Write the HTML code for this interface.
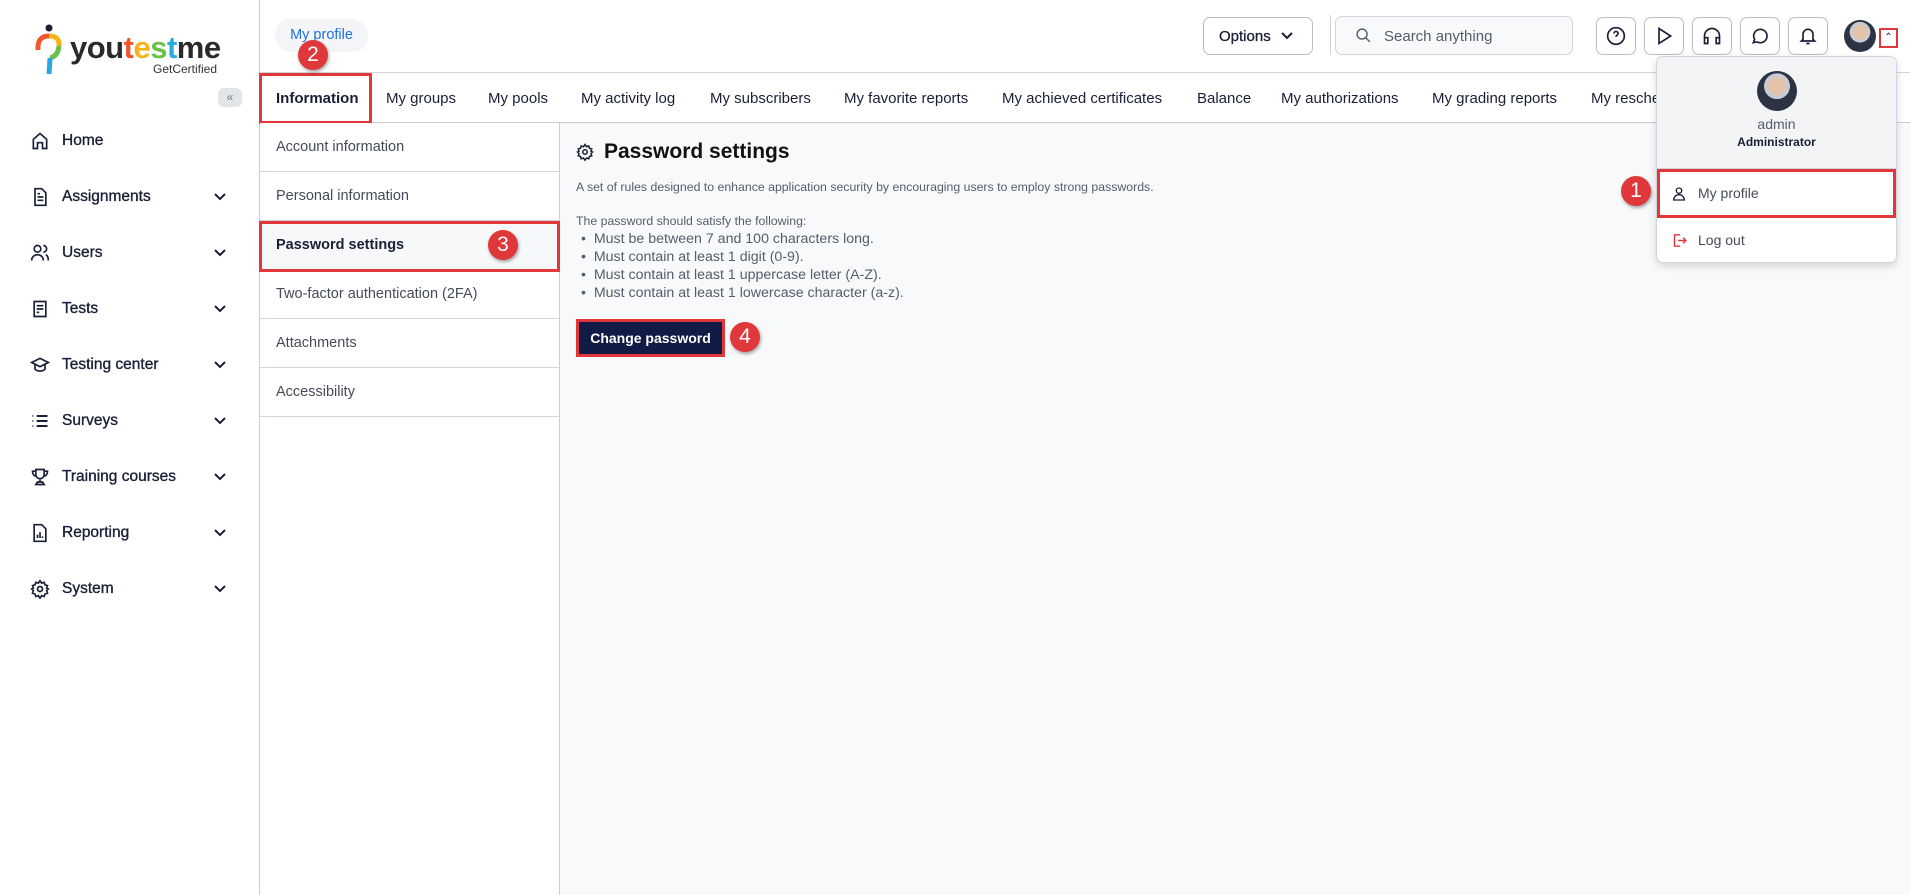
<!DOCTYPE html>
<html><head><meta charset="utf-8"><style>
*{box-sizing:border-box;margin:0;padding:0}
body{width:1910px;height:895px;overflow:hidden;background:#fff;font-family:"Liberation Sans",Arial,sans-serif;color:#1a1f36;position:relative}
.abs{position:absolute}
.side{left:0;top:0;width:260px;height:895px;border-right:1px solid #c9ced6;background:#fff}
.nav{position:absolute;left:30px;font-size:15.5px;font-weight:400;-webkit-text-stroke:0.35px #1a1f36;display:flex;align-items:center;color:#1a1f36}
.nav svg{margin-right:12px}
.chev{position:absolute;left:213px}
.top{left:260px;top:0;width:1650px;height:73px;border-bottom:1px solid #d0d5dc;background:#fff}
.tabs{left:260px;top:73px;width:1650px;height:50px;border-bottom:1px solid #c9ced6;background:#fff}
.tab{position:absolute;top:17px;font-size:15px;color:#1a1f36}
.sub{left:260px;top:123px;width:300px;height:772px;background:#fff;border-right:1px solid #c9ced6}
.si{position:absolute;left:0;width:299px;height:49px;border-bottom:1px solid #d0d5dc;font-size:14.5px;color:#444b57;padding:16px 0 0 16px}
.main{left:560px;top:123px;width:1350px;height:772px;background:#f8f9fb}
.badge{position:absolute;width:30px;height:30px;border-radius:50%;background:#e0383a;color:#fff;font-size:21px;text-align:center;line-height:30px;box-shadow:1px 2px 3px rgba(0,0,0,.35)}
.ib{position:absolute;top:17px;width:40px;height:38px;border:1px solid #b9bfc9;border-radius:7px;background:#fff;display:flex;align-items:center;justify-content:center}
.red{border:3px solid #e0383a;position:absolute}
</style></head><body>
<div class="abs side">
  <svg class="abs" style="left:34px;top:24px" width="30" height="56" viewBox="0 0 30 56">
    <circle cx="15" cy="4" r="3.5" fill="#1a1f36"/>
    <path d="M4 26 Q3 12 15 12" stroke="#f0562b" stroke-width="5" fill="none"/>
    <path d="M15 12 Q26 12 25 22" stroke="#f6b21b" stroke-width="5" fill="none"/>
    <path d="M25 22 Q24 32 16 34" stroke="#6cc04a" stroke-width="5" fill="none"/>
    <path d="M16 34 L15 50" stroke="#29a9e0" stroke-width="5" fill="none"/>
  </svg>
  <div class="abs" style="left:70px;top:30px;font-size:31px;font-weight:700;letter-spacing:-0.5px;color:#2a2a2a">you<span style="color:#f0562b">t</span><span style="color:#f6b21b">e</span><span style="color:#6cc04a">s</span><span style="color:#29a9e0">t</span>me</div>
  <div class="abs" style="left:153px;top:62px;font-size:12px;color:#333">GetCertified</div>
  <div class="abs" style="left:218px;top:88px;width:24px;height:19px;border-radius:6px;background:#e1e4e9;color:#777;font-size:12px;text-align:center;line-height:18px">«</div>
  <div class="nav" style="top:131px"><svg width="20" height="20" viewBox="0 0 24 24" fill="none" stroke="#1a1f36" stroke-width="2"><path d="M4 21V10l8-7 8 7v11h-5v-7H9v7z"/></svg>Home</div>
  <div class="nav" style="top:187px"><svg width="20" height="20" viewBox="0 0 24 24" fill="none" stroke="#1a1f36" stroke-width="2"><path d="M6 2h8l5 5v15H6z M9 12h7M9 16h7M9 8h3"/></svg>Assignments</div>
  <div class="nav" style="top:243px"><svg width="20" height="20" viewBox="0 0 24 24" fill="none" stroke="#1a1f36" stroke-width="2"><circle cx="9" cy="7" r="4"/><path d="M2 21c0-4 3-7 7-7s7 3 7 7M16 3a4 4 0 010 8M19 14c2 1 3 4 3 7"/></svg>Users</div>
  <div class="nav" style="top:299px"><svg width="20" height="20" viewBox="0 0 24 24" fill="none" stroke="#1a1f36" stroke-width="2"><path d="M5 3h14v18H5z M8 8h8M8 12h8M8 16h3"/></svg>Tests</div>
  <div class="nav" style="top:355px"><svg width="20" height="20" viewBox="0 0 24 24" fill="none" stroke="#1a1f36" stroke-width="2"><path d="M2 9l10-5 10 5-10 5z M6 11v6c3 3 9 3 12 0v-6"/></svg>Testing center</div>
  <div class="nav" style="top:411px"><svg width="20" height="20" viewBox="0 0 24 24" fill="none" stroke="#1a1f36" stroke-width="2.4"><path d="M3 6h1M3 12h1M3 18h1M8 6h13M8 12h13M8 18h13"/></svg>Surveys</div>
  <div class="nav" style="top:467px"><svg width="20" height="20" viewBox="0 0 24 24" fill="none" stroke="#1a1f36" stroke-width="2"><path d="M7 3h10v6a5 5 0 01-10 0z M7 5H3c0 4 2 6 4 6M17 5h4c0 4-2 6-4 6M12 14v4M7 21h10l-2-3H9z"/></svg>Training courses</div>
  <div class="nav" style="top:523px"><svg width="20" height="20" viewBox="0 0 24 24" fill="none" stroke="#1a1f36" stroke-width="2"><path d="M5 2h9l5 5v15H5z M9 18v-4M12 18v-7M15 18v-2"/></svg>Reporting</div>
  <div class="nav" style="top:579px"><svg width="20" height="20" viewBox="0 0 24 24" fill="none" stroke="#1a1f36" stroke-width="2"><circle cx="12" cy="12" r="3"/><path d="M12 2l2 3 3-1 1 3 3 1-1 3 2 1-2 2 1 3-3 1-1 3-3-1-2 3-2-3-3 1-1-3-3-1 1-3-2-2 2-1-1-3 3-1 1-3 3 1z"/></svg>System</div>
  <svg class="chev" style="top:190px" width="14" height="14" viewBox="0 0 14 14"><path d="M2 4l5 5 5-5" stroke="#1a1f36" stroke-width="2" fill="none"/></svg>
  <svg class="chev" style="top:246px" width="14" height="14" viewBox="0 0 14 14"><path d="M2 4l5 5 5-5" stroke="#1a1f36" stroke-width="2" fill="none"/></svg>
  <svg class="chev" style="top:302px" width="14" height="14" viewBox="0 0 14 14"><path d="M2 4l5 5 5-5" stroke="#1a1f36" stroke-width="2" fill="none"/></svg>
  <svg class="chev" style="top:358px" width="14" height="14" viewBox="0 0 14 14"><path d="M2 4l5 5 5-5" stroke="#1a1f36" stroke-width="2" fill="none"/></svg>
  <svg class="chev" style="top:414px" width="14" height="14" viewBox="0 0 14 14"><path d="M2 4l5 5 5-5" stroke="#1a1f36" stroke-width="2" fill="none"/></svg>
  <svg class="chev" style="top:470px" width="14" height="14" viewBox="0 0 14 14"><path d="M2 4l5 5 5-5" stroke="#1a1f36" stroke-width="2" fill="none"/></svg>
  <svg class="chev" style="top:526px" width="14" height="14" viewBox="0 0 14 14"><path d="M2 4l5 5 5-5" stroke="#1a1f36" stroke-width="2" fill="none"/></svg>
  <svg class="chev" style="top:582px" width="14" height="14" viewBox="0 0 14 14"><path d="M2 4l5 5 5-5" stroke="#1a1f36" stroke-width="2" fill="none"/></svg>
</div>

<div class="abs top">
  <div class="abs" style="left:15px;top:19px;width:93px;height:33px;border-radius:16px;background:#f3f5f8;color:#1f6fe5;font-size:14.5px;text-align:center;line-height:33px">My profile</div>
  <div class="abs" style="left:943px;top:17px;width:110px;height:38px;border:1px solid #b9bfc9;border-radius:7px;font-size:15px;padding:10px 0 0 15px;-webkit-text-stroke:0.3px #1a1f36">Options <svg width="12" height="10" viewBox="0 0 12 10" style="margin-left:6px"><path d="M1 2l5 5 5-5" stroke="#1a1f36" stroke-width="2" fill="none"/></svg></div>
  <div class="abs" style="left:1070px;top:15px;width:1px;height:40px;background:#d0d5dc"></div>
  <div class="abs" style="left:1075px;top:16px;width:238px;height:39px;border:1px solid #d0d5dc;border-radius:7px;background:#f8f9fb;font-size:15px;color:#555d6b;padding:11px 0 0 48px">Search anything</div>
  <svg class="abs" style="left:1095px;top:27px" width="17" height="17" viewBox="0 0 24 24" fill="none" stroke="#555d6b" stroke-width="2"><circle cx="10" cy="10" r="7"/><path d="M15 15l6 6"/></svg>
  <div class="ib" style="left:1336px"><svg width="20" height="20" viewBox="0 0 24 24" fill="none" stroke="#1a1f36" stroke-width="2"><circle cx="12" cy="12" r="10"/><path d="M9.5 9a2.5 2.5 0 115 0c0 2-2.5 2-2.5 4M12 17h.01"/></svg></div>
  <div class="ib" style="left:1384px"><svg width="20" height="20" viewBox="0 0 24 24" fill="none" stroke="#1a1f36" stroke-width="2"><path d="M6 3l14 9-14 9z"/></svg></div>
  <div class="ib" style="left:1432px"><svg width="20" height="20" viewBox="0 0 24 24" fill="none" stroke="#1a1f36" stroke-width="2"><path d="M3 18v-6a9 9 0 0118 0v6M3 14h4v7H3zM17 14h4v7h-4z"/></svg></div>
  <div class="ib" style="left:1480px"><svg width="20" height="20" viewBox="0 0 24 24" fill="none" stroke="#1a1f36" stroke-width="2"><path d="M4 20l1.5-4A8 8 0 1112 20a8 8 0 01-4-1z"/></svg></div>
  <div class="ib" style="left:1528px"><svg width="20" height="20" viewBox="0 0 24 24" fill="none" stroke="#1a1f36" stroke-width="2"><path d="M6 16V10a6 6 0 0112 0v6l2 2H4zM10 21h4"/></svg></div>
  <div class="abs" style="left:1584px;top:20px;width:32px;height:32px;border-radius:50%;background:radial-gradient(circle at 50% 38%,#e5c3a8 0 28%,#c9cdd3 29% 40%,#2c3444 41%)"></div>
  <div class="abs" style="left:1619px;top:28px;width:19px;height:20px;border:2px solid #e0383a;font-size:10px;text-align:center;line-height:16px">⌃</div>
</div>

<div class="abs tabs">
  <div class="tab" style="left:16px;font-weight:700">Information</div>
  <div class="tab" style="left:126px">My groups</div>
  <div class="tab" style="left:228px">My pools</div>
  <div class="tab" style="left:321px">My activity log</div>
  <div class="tab" style="left:450px">My subscribers</div>
  <div class="tab" style="left:584px">My favorite reports</div>
  <div class="tab" style="left:742px">My achieved certificates</div>
  <div class="tab" style="left:937px">Balance</div>
  <div class="tab" style="left:1021px">My authorizations</div>
  <div class="tab" style="left:1172px">My grading reports</div>
  <div class="tab" style="left:1331px">My resche</div>
</div>
<div class="red" style="left:259px;top:73px;width:113px;height:51px"></div>

<div class="abs sub">
  <div class="si" style="top:0">Account information</div>
  <div class="si" style="top:49px">Personal information</div>
  <div class="si" style="top:98px;background:#f7f8fa;font-weight:700;color:#1a1f36">Password settings</div>
  <div class="si" style="top:147px">Two-factor authentication (2FA)</div>
  <div class="si" style="top:196px">Attachments</div>
  <div class="si" style="top:245px">Accessibility</div>
</div>
<div class="red" style="left:259px;top:221px;width:301px;height:51px"></div>

<div class="abs main">
  <svg class="abs" style="left:16px;top:20px" width="18" height="18" viewBox="0 0 24 24" fill="none" stroke="#1a1f36" stroke-width="2"><circle cx="12" cy="12" r="3"/><path d="M12 2l2 3 3-1 1 3 3 1-1 3 2 1-2 2 1 3-3 1-1 3-3-1-2 3-2-3-3 1-1-3-3-1 1-3-2-2 2-1-1-3 3-1 1-3 3 1z"/></svg>
  <div class="abs" style="left:44px;top:17px;font-size:21px;font-weight:600;color:#111">Password settings</div>
  <div class="abs" style="left:16px;top:57px;font-size:12.3px;color:#555d6b">A set of rules designed to enhance application security by encouraging users to employ strong passwords.</div>
  <div class="abs" style="left:16px;top:91px;font-size:12.3px;color:#555d6b">The password should satisfy the following:</div>
  <div class="abs" style="left:21px;top:107px;font-size:14.2px;color:#555d6b;line-height:18px">
    <div>•&nbsp;&nbsp;Must be between 7 and 100 characters long.</div>
    <div>•&nbsp;&nbsp;Must contain at least 1 digit (0-9).</div>
    <div>•&nbsp;&nbsp;Must contain at least 1 uppercase letter (A-Z).</div>
    <div>•&nbsp;&nbsp;Must contain at least 1 lowercase character (a-z).</div>
  </div>
  <div class="abs" style="left:16px;top:196px;width:149px;height:38px;border:3px solid #e0383a;background:#121b45;color:#fff;font-size:14px;font-weight:700;text-align:center;line-height:32px">Change password</div>
</div>

<div class="abs" style="left:1656px;top:56px;width:241px;height:207px;background:#fff;border:1px solid #d0d5dc;border-radius:7px;box-shadow:0 3px 8px rgba(0,0,0,.15);overflow:hidden">
  <div style="height:112px;background:#f3f4f6;border-bottom:1px solid #d0d5dc;position:relative">
    <div class="abs" style="left:100px;top:14px;width:40px;height:40px;border-radius:50%;background:radial-gradient(circle at 50% 38%,#e5c3a8 0 28%,#c9cdd3 29% 40%,#2c3444 41%)"></div>
    <div class="abs" style="left:0;width:239px;top:59px;text-align:center;font-size:14px;color:#555d6b">admin</div>
    <div class="abs" style="left:0;width:239px;top:78px;text-align:center;font-size:12px;font-weight:700;color:#1a1f36">Administrator</div>
  </div>
  <div class="abs" style="left:0;top:112px;width:239px;height:49px;border:3px solid #e0383a;font-size:14px;color:#444b57;padding:13px 0 0 38px">My profile</div>
  <svg class="abs" style="left:14px;top:129px" width="16" height="16" viewBox="0 0 24 24" fill="none" stroke="#1a1f36" stroke-width="2"><circle cx="12" cy="7" r="4"/><path d="M4 21c0-5 4-8 8-8s8 3 8 8z"/></svg>
  <div class="abs" style="left:41px;top:175px;font-size:14px;color:#444b57">Log out</div>
  <svg class="abs" style="left:14px;top:175px" width="17" height="17" viewBox="0 0 24 24" fill="none" stroke="#e0383a" stroke-width="2"><path d="M13 4H5v16h8M10 12h11M17 8l4 4-4 4"/></svg>
</div>

<div class="badge" style="left:1621px;top:176px">1</div>
<div class="badge" style="left:298px;top:40px">2</div>
<div class="badge" style="left:488px;top:230px">3</div>
<div class="badge" style="left:730px;top:322px">4</div>
</body></html>
